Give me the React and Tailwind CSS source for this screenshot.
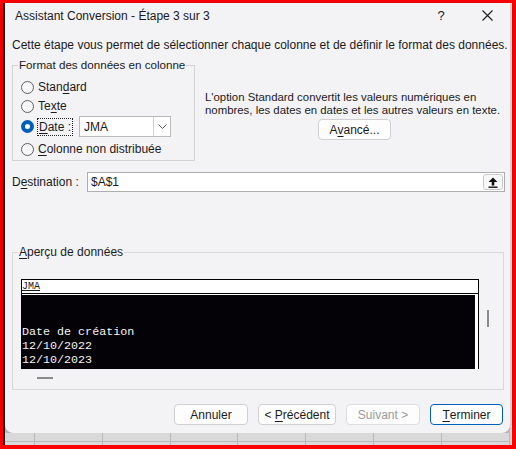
import React from 'react';

const U = ({ children }) => <span className="underline underline-offset-2">{children}</span>;

const Radio = ({ checked }) =>
  checked ? (
    <span className="w-[13px] h-[13px] rounded-full bg-[#005fb8] flex items-center justify-center shrink-0">
      <span className="w-[5px] h-[5px] rounded-full bg-white" />
    </span>
  ) : (
    <span className="w-[13px] h-[13px] rounded-full border border-[#5f5f5f] bg-[#f7f7f7] shrink-0" />
  );

const Btn = ({ children, w, className = '' }) => (
  <button
    className={`h-[21px] rounded-[4px] border bg-[#fdfdfd] text-[12px] leading-none whitespace-nowrap flex items-center justify-center ${w} ${className}`}
  >
    {children}
  </button>
);

const App = () => {
  const cols = [0, 1, 2, 3, 4, 5, 6];

  return (
    <div
      className="w-[516px] h-[449px] bg-[#ff0000] pt-[3px] pl-[3px] pr-[4px] pb-[4px] text-[#1b1b1b] whitespace-nowrap"
      style={{ fontFamily: '"Liberation Sans", Arial, sans-serif' }}
    >
      <div className="flex h-full bg-[#d5d5d5]">
        <div className="w-[2px] bg-[#1e1e1e]" />
        <div className="flex flex-col w-[505px]">
          {/* dialog */}
          <div className="h-[430px] bg-[#f3f2f5] rounded-b-[8px] shadow-[0_2px_6px_rgba(0,0,0,0.35)] flex flex-col">
            {/* title bar */}
            <div className="h-[25px] flex items-center">
              <span className="pl-[10px] text-[12px]">Assistant Conversion - Étape 3 sur 3</span>
              <span className="ml-auto w-[46px] text-center text-[13px]">?</span>
              <span className="w-[46px] flex justify-center">
                <svg width="11" height="11" viewBox="0 0 11 11" stroke="#1b1b1b" strokeWidth="1.1">
                  <path d="M0.5 0.5 L10.5 10.5 M10.5 0.5 L0.5 10.5" />
                </svg>
              </span>
            </div>

            <div className="mt-[9px] pl-[7px] text-[12px] leading-[16px]">
              Cette étape vous permet de sélectionner chaque colonne et de définir le format des données.
            </div>

            <div className="flex mt-[4px] pl-[7px]">
              <fieldset className="w-[183px] h-[104px] border border-[#d3d3d3] text-[12px]">
                <legend className="ml-[5px] px-[1px] leading-[16px] text-[11.6px]">Format des données en colonne</legend>
                <div className="flex flex-col pl-[8px] pt-[6px]">
                  <div className="h-[16px] flex items-center gap-[4px]">
                    <Radio />
                    <span>Stan<U>d</U>ard</span>
                  </div>
                  <div className="h-[16px] mt-[3px] flex items-center gap-[4px]">
                    <Radio />
                    <span>Te<U>x</U>te</span>
                  </div>
                  <div className="h-[21px] mt-[2px] flex items-center">
                    <Radio checked />
                    <span className="ml-[3px] px-[1px] h-[18px] flex items-center border border-dotted border-[#222]">
                      <U>D</U>ate :
                    </span>
                    <div className="ml-[6px] w-[92px] h-[21px] border border-[#b9b9b9] bg-white flex">
                      <span className="flex-1 pl-[4px] flex items-center">JMA</span>
                      <span className="w-[17px] border-l border-[#d0d0d0] flex items-center justify-center">
                        <svg width="9" height="5" viewBox="0 0 9 5" fill="none" stroke="#555" strokeWidth="1">
                          <path d="M0.5 0.5 L4.5 4.5 L8.5 0.5" />
                        </svg>
                      </span>
                    </div>
                  </div>
                  <div className="h-[16px] mt-[4px] flex items-center gap-[4px]">
                    <Radio />
                    <span><U>C</U>olonne non distribuée</span>
                  </div>
                </div>
              </fieldset>

              <div className="ml-[10px] mt-[34px] flex flex-col text-[11.4px] leading-[12.5px]">
                <span>L'option Standard convertit les valeurs numériques en</span>
                <span>nombres, les dates en dates et les autres valeurs en texte.</span>
                <Btn w="w-[73px] ml-[113px] mt-[3px]" className="border-[#d0d0d0]">
                  A<U>v</U>ancé...
                </Btn>
              </div>
            </div>

            <div className="flex items-center mt-[11px] pl-[7px] pr-[5px] text-[12px]">
              <span className="w-[75px]">D<U>e</U>stination :</span>
              <div className="flex-1 h-[20px] border border-[#aeaeae] bg-white flex items-center">
                <span className="pl-[3px] flex-1">$A$1</span>
                <span className="w-[20px] h-[16px] mr-[1px] rounded-[3px] border border-[#c8c8c8] bg-[#f9f9f9] flex items-center justify-center">
                  <svg width="10" height="11" viewBox="0 0 10 11" fill="#111">
                    <path d="M5 0.5 L9.5 5 L6.3 5 L6.3 8.5 L3.7 8.5 L3.7 5 L0.5 5 Z" />
                    <rect x="0.5" y="9.5" width="9" height="1.4" />
                  </svg>
                </span>
              </div>
            </div>

            <div className="pl-[7px] mt-[52px]">
              <fieldset className="w-[492px] h-[146px] border border-[#d8d8d8] text-[12px]">
                <legend className="ml-[5px] px-[1px] leading-[16px]"><U>A</U>perçu de données</legend>
                <div className="flex pl-[8px] mt-[19px]">
                  <div className="w-[458px] h-[90px] border-t border-l border-r border-black bg-white flex flex-col">
                    <div
                      className="h-[14px] border-b border-black text-[10px] leading-[14px]"
                      style={{ fontFamily: '"Liberation Mono", monospace' }}
                    >
                      <span className="underline">JMA</span>
                    </div>
                    <div
                      className="flex-1 mt-[1px] mr-[3px] bg-[#040206] text-[#f4f4f4] text-[11.7px] leading-[14px] pt-[30px]"
                      style={{ fontFamily: '"Liberation Mono", monospace' }}
                    >
                      <div>Date de création</div>
                      <div>12/10/2022</div>
                      <div>12/10/2023</div>
                    </div>
                  </div>
                  <div className="w-[10px] pl-[8px] pt-[31px]">
                    <div className="w-[2px] h-[17px] bg-[#8a8a8a]" />
                  </div>
                </div>
                <div className="ml-[24px] mt-[8px] w-[16px] h-[2px] bg-[#8a8a8a]" />
              </fieldset>
            </div>

            <div className="flex justify-end gap-[10px] mt-[14px] pr-[7px] text-[#1b1b1b]">
              <Btn w="w-[74px]" className="border-[#d0d0d0]">Annuler</Btn>
              <Btn w="w-[78px]" className="border-[#d0d0d0]">&lt;&nbsp;<U>P</U>récédent</Btn>
              <Btn w="w-[74px]" className="border-[#dcdcdc] text-[#9a9a9a]">Suivant &gt;</Btn>
              <Btn w="w-[73px]" className="border-[#005fb8]"><U>T</U>erminer</Btn>
            </div>
          </div>

          {/* spreadsheet peeking below */}
          <div className="flex-1 flex flex-col bg-[#d9d9d9]">
            <div className="flex-1 flex">
              <div className="w-[32px] border-r border-[#b8b8b8]" />
              {cols.map((c) => (
                <div key={c} className="w-[73px] border-r border-[#b8b8b8]" />
              ))}
            </div>
            <div className="h-[4px] border-t border-[#b8b8b8] flex">
              <div className="w-[32px] border-r border-[#b8b8b8]" />
              {cols.map((c) => (
                <div key={c} className="w-[73px] border-r border-[#b8b8b8]" />
              ))}
            </div>
          </div>
        </div>
        <div className="w-[2px] bg-[#cfd3d8]" />
      </div>
    </div>
  );
};

export default App;
